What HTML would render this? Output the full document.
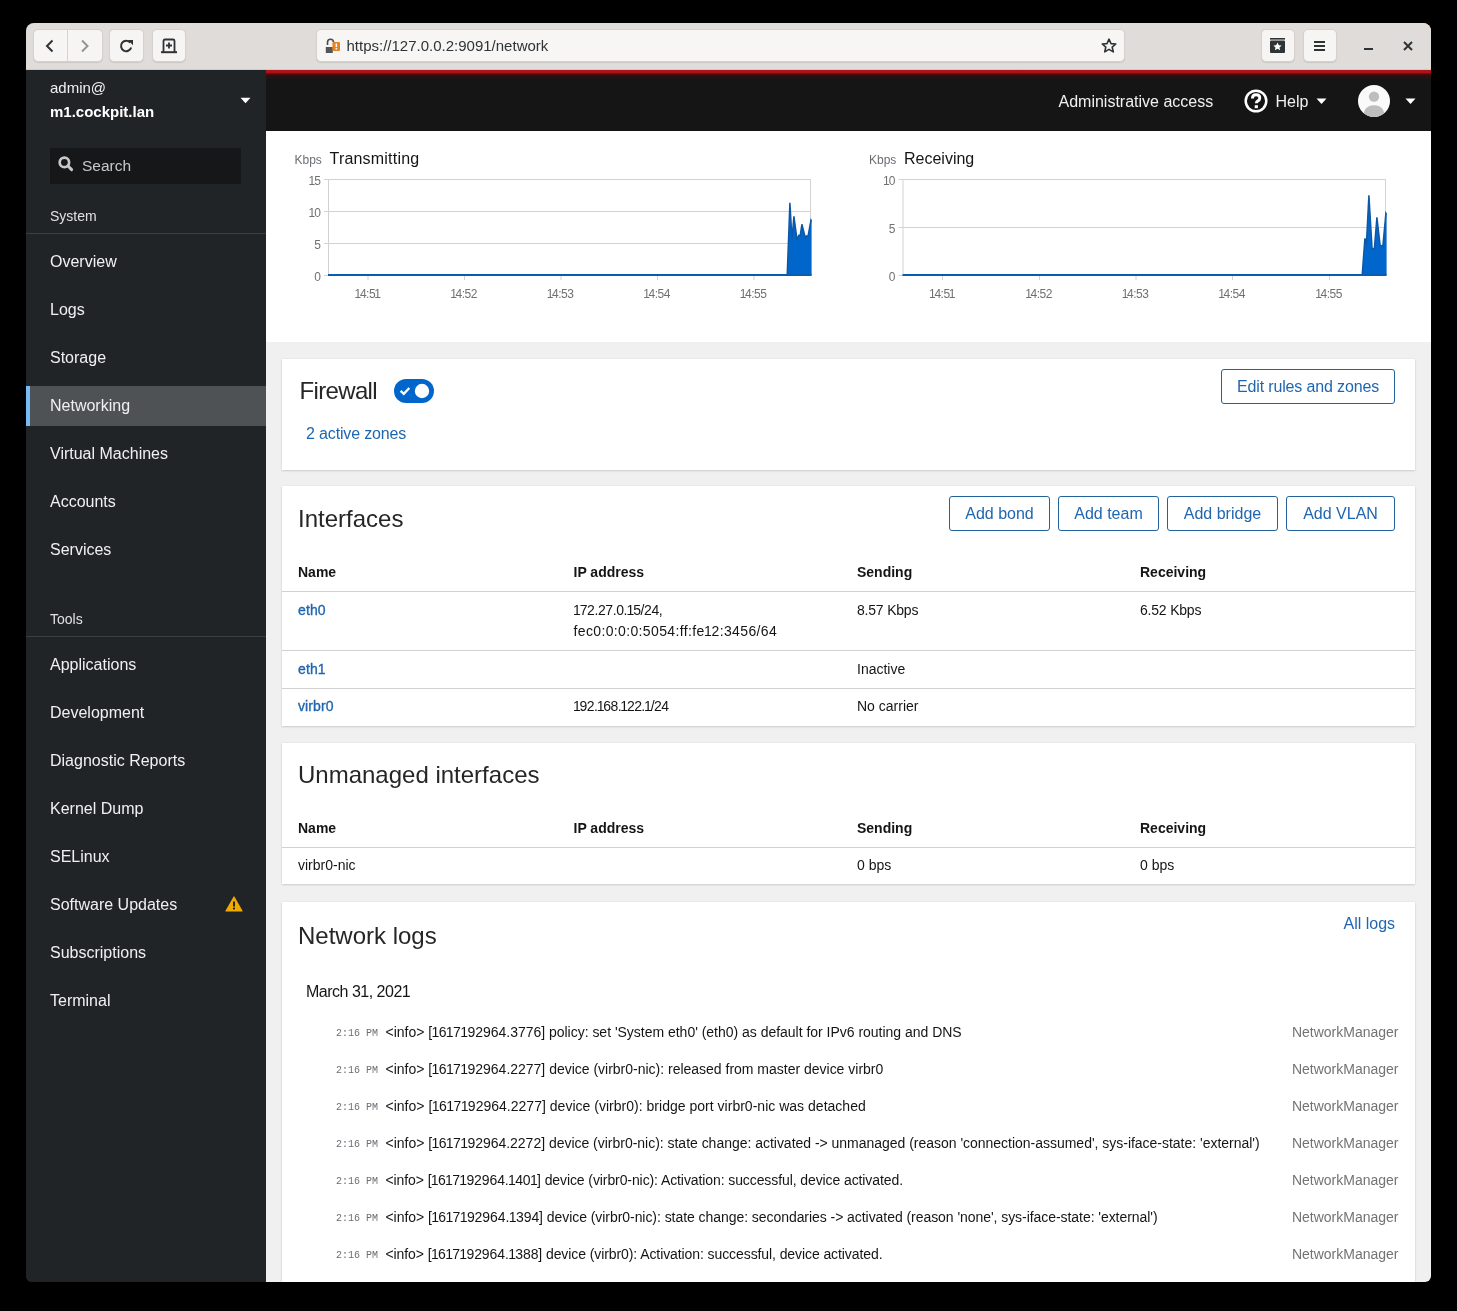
<!DOCTYPE html>
<html><head><meta charset="utf-8">
<style>
*{box-sizing:border-box}
html,body{margin:0;padding:0}
body{width:1457px;height:1311px;background:#000;position:relative;overflow:hidden;font-family:"Liberation Sans",sans-serif;color:#151515}
.a{position:absolute}
.btn{background:#f6f5f4;border:1px solid #d6d1cd;border-radius:5px;box-shadow:0 1px 1px rgba(0,0,0,.09)}
.card{background:#fff;box-shadow:0 1px 2px 0 rgba(3,3,3,.14),0 0 2px 0 rgba(3,3,3,.07)}
.obtn{position:absolute;border:1px solid #22639c;border-radius:3px;background:#fff}
svg{position:absolute;overflow:visible}
</style></head>
<body><div style="position:absolute;left:0;top:0;width:1457px;height:1311px;will-change:transform">
<div class="a" style="left:26px;top:23px;width:1405px;height:1259px;background:linear-gradient(to right,#212427 240px,#f0f0f0 240px);border-radius:8px 8px 6px 6px"></div>
<div class="a" style="left:26px;top:23px;width:1405px;height:47px;background:#dfdcd9;border-radius:8px 8px 0 0;border-bottom:1px solid #cfcac6"></div>
<div class="a btn" style="left:33px;top:29px;width:70px;height:33px"></div>
<div class="a" style="left:67px;top:30px;width:1px;height:31px;background:#d8d3cf"></div>
<div class="a btn" style="left:109px;top:29px;width:35px;height:33px"></div>
<div class="a btn" style="left:152px;top:29px;width:34px;height:33px"></div>
<svg style="left:44px;top:39px" width="12" height="14" viewBox="0 0 12 14"><path d="M8.5 1.5 L3 7 L8.5 12.5" fill="none" stroke="#2e3436" stroke-width="2"/></svg>
<svg style="left:79px;top:39px" width="12" height="14" viewBox="0 0 12 14"><path d="M3 1.5 L8.5 7 L3 12.5" fill="none" stroke="#929595" stroke-width="2"/></svg>
<svg style="left:119px;top:39px" width="16" height="14" viewBox="0 0 16 14"><path d="M11.2 3.6 A5.2 5.2 0 1 0 12.2 8.5" fill="none" stroke="#2e3436" stroke-width="2"/><path d="M8.8 1 L14 1 L14 6.2 Z" fill="#2e3436"/></svg>
<svg style="left:160px;top:38px" width="18" height="16" viewBox="0 0 18 16"><path d="M3.5 14 V3 Q3.5 1.5 5 1.5 H13 Q14.5 1.5 14.5 3 V14" fill="none" stroke="#2e3436" stroke-width="1.8"/><rect x="1" y="13.2" width="16" height="2" fill="#2e3436"/><path d="M9 4.5 V10.5 M6 7.5 H12" stroke="#2e3436" stroke-width="1.8"/></svg>
<div class="a btn" style="left:316px;top:29px;width:809px;height:33px;background:#f7f6f5"></div>
<svg style="left:325px;top:38px" width="16" height="16" viewBox="0 0 16 16"><path d="M2.5 7 V4.2 A3 3 0 0 1 8.5 4.2" fill="none" stroke="#4d4d4d" stroke-width="1.6"/><rect x="0.8" y="9" width="7" height="6" fill="#555"/><rect x="7.5" y="4" width="7.5" height="9" rx="1.2" fill="#e5841e"/><rect x="10.6" y="5.5" width="1.5" height="3.6" fill="#fff"/><rect x="10.6" y="10" width="1.5" height="1.5" fill="#fff"/></svg>
<div class="a " style="left:346.5px;top:37.80px;font-size:15px;line-height:15px;font-family:'Liberation Sans',sans-serif;white-space:nowrap;color:#2e3436">https://127.0.0.2:9091/network</div>
<svg style="left:1101px;top:38px" width="16" height="15" viewBox="0 0 16 15"><path d="M8 1.2 L10 5.6 L14.8 6 L11.2 9.2 L12.3 13.9 L8 11.4 L3.7 13.9 L4.8 9.2 L1.2 6 L6 5.6 Z" fill="none" stroke="#2e3436" stroke-width="1.6" stroke-linejoin="round"/></svg>
<div class="a btn" style="left:1261px;top:29px;width:34px;height:33px"></div>
<div class="a btn" style="left:1303px;top:29px;width:34px;height:33px"></div>
<svg style="left:1269px;top:37px" width="17" height="17" viewBox="0 0 17 17"><rect x="1" y="1" width="15" height="1.6" fill="#2e3436"/><rect x="1" y="3.5" width="15" height="12.5" rx="1" fill="#2e3436"/><path d="M8.5 5.6 L9.8 8.3 L12.6 8.6 L10.5 10.5 L11.1 13.3 L8.5 11.8 L5.9 13.3 L6.5 10.5 L4.4 8.6 L7.2 8.3 Z" fill="#fff"/></svg>
<svg style="left:1313px;top:40px" width="13" height="12" viewBox="0 0 13 12"><rect x="1" y="1" width="11" height="2" fill="#2e3436"/><rect x="1" y="5" width="11" height="2" fill="#2e3436"/><rect x="1" y="9" width="11" height="2" fill="#2e3436"/></svg>
<div class="a" style="left:1364px;top:48px;width:9px;height:2px;background:#2e3436"></div>
<svg style="left:1403px;top:41px" width="10" height="10" viewBox="0 0 10 10"><path d="M1 1 L9 9 M9 1 L1 9" stroke="#2e3436" stroke-width="2"/></svg>
<div class="a" style="left:26px;top:70px;width:240px;height:1212px;background:#212427;border-bottom-left-radius:6px"></div>
<div class="a " style="left:50px;top:80.30px;font-size:15px;line-height:15px;font-family:'Liberation Sans',sans-serif;white-space:nowrap;color:#f0f0f0">admin@</div>
<div class="a " style="left:50px;top:104.30px;font-size:15px;line-height:15px;font-family:'Liberation Sans',sans-serif;white-space:nowrap;color:#fff;font-weight:700">m1.cockpit.lan</div>
<svg style="left:240px;top:97px" width="11" height="7" viewBox="0 0 11 7"><path d="M0.5 0.8 L10.5 0.8 L5.5 6.2 Z" fill="#fff"/></svg>
<div class="a" style="left:50px;top:148px;width:191px;height:36px;background:#161718"></div>
<svg style="left:58px;top:156px" width="16" height="16" viewBox="0 0 16 16"><circle cx="6.4" cy="6.4" r="4.7" fill="none" stroke="#c8c8c8" stroke-width="2.7"/><path d="M9.8 9.8 L13.6 13.6" stroke="#c8c8c8" stroke-width="3" stroke-linecap="round"/></svg>
<div class="a " style="left:82px;top:157.58px;font-size:15.5px;line-height:15.5px;font-family:'Liberation Sans',sans-serif;white-space:nowrap;color:#c8c8c8">Search</div>
<div class="a " style="left:50px;top:209.15px;font-size:14px;line-height:14px;font-family:'Liberation Sans',sans-serif;white-space:nowrap;color:#e0e0e0">System</div>
<div class="a" style="left:26px;top:233px;width:240px;height:1px;background:#3c3f42"></div>
<div class="a" style="left:26px;top:386px;width:240px;height:40px;background:#4f5255"></div>
<div class="a" style="left:26px;top:386px;width:4px;height:40px;background:#73bcf7"></div>
<div class="a " style="left:50px;top:254.46px;font-size:16px;line-height:16px;font-family:'Liberation Sans',sans-serif;white-space:nowrap;color:#f0f0f0">Overview</div>
<div class="a " style="left:50px;top:302.46px;font-size:16px;line-height:16px;font-family:'Liberation Sans',sans-serif;white-space:nowrap;color:#f0f0f0">Logs</div>
<div class="a " style="left:50px;top:350.46px;font-size:16px;line-height:16px;font-family:'Liberation Sans',sans-serif;white-space:nowrap;color:#f0f0f0">Storage</div>
<div class="a " style="left:50px;top:398.46px;font-size:16px;line-height:16px;font-family:'Liberation Sans',sans-serif;white-space:nowrap;color:#f0f0f0">Networking</div>
<div class="a " style="left:50px;top:446.46px;font-size:16px;line-height:16px;font-family:'Liberation Sans',sans-serif;white-space:nowrap;color:#f0f0f0">Virtual Machines</div>
<div class="a " style="left:50px;top:494.46px;font-size:16px;line-height:16px;font-family:'Liberation Sans',sans-serif;white-space:nowrap;color:#f0f0f0">Accounts</div>
<div class="a " style="left:50px;top:542.46px;font-size:16px;line-height:16px;font-family:'Liberation Sans',sans-serif;white-space:nowrap;color:#f0f0f0">Services</div>
<div class="a " style="left:50px;top:612.15px;font-size:14px;line-height:14px;font-family:'Liberation Sans',sans-serif;white-space:nowrap;color:#e0e0e0">Tools</div>
<div class="a" style="left:26px;top:636px;width:240px;height:1px;background:#3c3f42"></div>
<div class="a " style="left:50px;top:657.46px;font-size:16px;line-height:16px;font-family:'Liberation Sans',sans-serif;white-space:nowrap;color:#f0f0f0">Applications</div>
<div class="a " style="left:50px;top:705.46px;font-size:16px;line-height:16px;font-family:'Liberation Sans',sans-serif;white-space:nowrap;color:#f0f0f0">Development</div>
<div class="a " style="left:50px;top:753.46px;font-size:16px;line-height:16px;font-family:'Liberation Sans',sans-serif;white-space:nowrap;color:#f0f0f0">Diagnostic Reports</div>
<div class="a " style="left:50px;top:801.46px;font-size:16px;line-height:16px;font-family:'Liberation Sans',sans-serif;white-space:nowrap;color:#f0f0f0">Kernel Dump</div>
<div class="a " style="left:50px;top:849.46px;font-size:16px;line-height:16px;font-family:'Liberation Sans',sans-serif;white-space:nowrap;color:#f0f0f0">SELinux</div>
<div class="a " style="left:50px;top:897.46px;font-size:16px;line-height:16px;font-family:'Liberation Sans',sans-serif;white-space:nowrap;color:#f0f0f0">Software Updates</div>
<div class="a " style="left:50px;top:945.46px;font-size:16px;line-height:16px;font-family:'Liberation Sans',sans-serif;white-space:nowrap;color:#f0f0f0">Subscriptions</div>
<div class="a " style="left:50px;top:993.46px;font-size:16px;line-height:16px;font-family:'Liberation Sans',sans-serif;white-space:nowrap;color:#f0f0f0">Terminal</div>
<svg style="left:225px;top:896px" width="18" height="16" viewBox="0 0 18 16"><path d="M9 1 L17 15 L1 15 Z" fill="#f0ab00" stroke="#f0ab00" stroke-width="1.2" stroke-linejoin="round"/><rect x="8.1" y="5.5" width="1.8" height="5" fill="#151515"/><rect x="8.1" y="11.6" width="1.8" height="1.8" fill="#151515"/></svg>
<div class="a" style="left:266px;top:70px;width:1165px;height:61px;background:#151515"></div>
<div class="a" style="left:266px;top:70px;width:1165px;height:10px;background:linear-gradient(#b3141a 0,#a81218 2.5px,#5e0a0c 4px,#2e1011 5.5px,#1d1515 8px,#151515 10px)"></div>
<div class="a " style="left:1058.5px;top:93.96px;font-size:16px;line-height:16px;font-family:'Liberation Sans',sans-serif;white-space:nowrap;color:#f0f0f0">Administrative access</div>
<svg style="left:1244px;top:89px" width="24" height="24" viewBox="0 0 24 24"><circle cx="12" cy="12" r="10.3" fill="none" stroke="#fff" stroke-width="2.5"/><path d="M8.4 9.6 Q8.4 5.8 12.1 5.8 Q15.8 5.8 15.8 9 Q15.8 11 13.6 12.1 Q12.3 12.8 12.3 14.3" fill="none" stroke="#fff" stroke-width="2.9"/><rect x="10.7" y="16.2" width="3.2" height="3" fill="#fff"/></svg>
<div class="a " style="left:1275.5px;top:93.96px;font-size:16px;line-height:16px;font-family:'Liberation Sans',sans-serif;white-space:nowrap;color:#f0f0f0">Help</div>
<svg style="left:1316px;top:98px" width="11" height="7" viewBox="0 0 11 7"><path d="M0.5 0.5 L10.5 0.5 L5.5 6 Z" fill="#fff"/></svg>
<svg style="left:1358px;top:85px" width="32" height="32" viewBox="0 0 32 32"><clipPath id="av"><circle cx="16" cy="16" r="16"/></clipPath><circle cx="16" cy="16" r="16" fill="#fafafa"/><g clip-path="url(#av)"><circle cx="16" cy="11.6" r="5.2" fill="#bebebe"/><path d="M5.5 32 Q5.5 20.3 16 20.3 Q26.5 20.3 26.5 32 Z" fill="#bebebe"/></g></svg>
<svg style="left:1405px;top:98px" width="11" height="7" viewBox="0 0 11 7"><path d="M0.5 0.5 L10.5 0.5 L5.5 6 Z" fill="#fff"/></svg>
<div class="a" style="left:266px;top:131px;width:1165px;height:211px;background:#fff"></div>
<div class="a " style="left:294.5px;top:153.84px;font-size:12px;line-height:12px;font-family:'Liberation Sans',sans-serif;white-space:nowrap;color:#6a6e73">Kbps</div>
<div class="a " style="left:329.5px;top:151.46px;font-size:16px;line-height:16px;font-family:'Liberation Sans',sans-serif;white-space:nowrap;color:#151515;letter-spacing:0.2px">Transmitting</div>
<svg style="left:0;top:0" width="1457" height="1311">
<line x1="324" y1="275.5" x2="810" y2="275.5" stroke="#d2d2d2" stroke-width="1"/>
<line x1="324" y1="243.5" x2="810" y2="243.5" stroke="#d2d2d2" stroke-width="1"/>
<line x1="324" y1="211.5" x2="810" y2="211.5" stroke="#d2d2d2" stroke-width="1"/>
<line x1="324" y1="179.5" x2="810" y2="179.5" stroke="#d2d2d2" stroke-width="1"/>
<line x1="328.5" y1="179" x2="328.5" y2="275" stroke="#d2d2d2" stroke-width="1"/>
<line x1="810.5" y1="179" x2="810.5" y2="275" stroke="#d2d2d2" stroke-width="1"/>
<line x1="368.0" y1="275" x2="368.0" y2="280" stroke="#d2d2d2" stroke-width="1"/>
<line x1="464.5" y1="275" x2="464.5" y2="280" stroke="#d2d2d2" stroke-width="1"/>
<line x1="561.0" y1="275" x2="561.0" y2="280" stroke="#d2d2d2" stroke-width="1"/>
<line x1="657.5" y1="275" x2="657.5" y2="280" stroke="#d2d2d2" stroke-width="1"/>
<line x1="754.0" y1="275" x2="754.0" y2="280" stroke="#d2d2d2" stroke-width="1"/>
<path d="M328.0 275.0 L787.2 275.0 L789.9 202.7 L792.0 239.5 L793.9 216.4 L797.1 240.1 L798.8 235.3 L800.2 235.7 L801.9 224.3 L805.4 238.1 L806.4 236.0 L808.1 236.0 L811.0 220.2 L811.6 221.2 L811.6 275.0 Z" fill="#0066cc"/>
<path d="M787.2 275.0 L789.9 202.7 L792.0 239.5 L793.9 216.4 L797.1 240.1 L798.8 235.3 L800.2 235.7 L801.9 224.3 L805.4 238.1 L806.4 236.0 L808.1 236.0 L811.0 220.2 L811.6 221.2" fill="none" stroke="#0d58a6" stroke-width="1.5" stroke-linejoin="miter"/>
<line x1="328" y1="275" x2="811.6" y2="275" stroke="#0b5cad" stroke-width="2"/>
</svg>
<div class="a" style="left:268px;top:271.0px;width:53px;text-align:right;font-size:12px;line-height:12px;color:#707070">0</div>
<div class="a" style="left:268px;top:239.0px;width:53px;text-align:right;font-size:12px;line-height:12px;color:#707070">5</div>
<div class="a" style="left:268px;top:207.0px;width:53px;text-align:right;font-size:12px;line-height:12px;color:#707070"><span style="margin:0 -0.8px">1</span>0</div>
<div class="a" style="left:268px;top:175.0px;width:53px;text-align:right;font-size:12px;line-height:12px;color:#707070"><span style="margin:0 -0.8px">1</span>5</div>
<div class="a" style="left:337.5px;top:288px;width:60px;text-align:center;font-size:12px;line-height:12px;letter-spacing:-0.5px;color:#707070"><span style="margin:0 -0.9px">1</span>4:5<span style="margin:0 -0.9px">1</span></div>
<div class="a" style="left:434px;top:288px;width:60px;text-align:center;font-size:12px;line-height:12px;letter-spacing:-0.5px;color:#707070"><span style="margin:0 -0.9px">1</span>4:52</div>
<div class="a" style="left:530.5px;top:288px;width:60px;text-align:center;font-size:12px;line-height:12px;letter-spacing:-0.5px;color:#707070"><span style="margin:0 -0.9px">1</span>4:53</div>
<div class="a" style="left:627px;top:288px;width:60px;text-align:center;font-size:12px;line-height:12px;letter-spacing:-0.5px;color:#707070"><span style="margin:0 -0.9px">1</span>4:54</div>
<div class="a" style="left:723.5px;top:288px;width:60px;text-align:center;font-size:12px;line-height:12px;letter-spacing:-0.5px;color:#707070"><span style="margin:0 -0.9px">1</span>4:55</div>
<div class="a " style="left:869.0px;top:153.84px;font-size:12px;line-height:12px;font-family:'Liberation Sans',sans-serif;white-space:nowrap;color:#6a6e73">Kbps</div>
<div class="a " style="left:904.0px;top:151.46px;font-size:16px;line-height:16px;font-family:'Liberation Sans',sans-serif;white-space:nowrap;color:#151515;letter-spacing:0">Receiving</div>
<svg style="left:0;top:0" width="1457" height="1311">
<line x1="898.5" y1="275.5" x2="1385" y2="275.5" stroke="#d2d2d2" stroke-width="1"/>
<line x1="898.5" y1="227.5" x2="1385" y2="227.5" stroke="#d2d2d2" stroke-width="1"/>
<line x1="898.5" y1="179.5" x2="1385" y2="179.5" stroke="#d2d2d2" stroke-width="1"/>
<line x1="903.0" y1="179" x2="903.0" y2="275" stroke="#d2d2d2" stroke-width="1"/>
<line x1="1385.5" y1="179" x2="1385.5" y2="275" stroke="#d2d2d2" stroke-width="1"/>
<line x1="942.5" y1="275" x2="942.5" y2="280" stroke="#d2d2d2" stroke-width="1"/>
<line x1="1039.5" y1="275" x2="1039.5" y2="280" stroke="#d2d2d2" stroke-width="1"/>
<line x1="1136.0" y1="275" x2="1136.0" y2="280" stroke="#d2d2d2" stroke-width="1"/>
<line x1="1232.5" y1="275" x2="1232.5" y2="280" stroke="#d2d2d2" stroke-width="1"/>
<line x1="1329.5" y1="275" x2="1329.5" y2="280" stroke="#d2d2d2" stroke-width="1"/>
<path d="M902.5 275.0 L1362.2 275.0 L1364.9 238.4 L1366.4 244.1 L1368.9 195.3 L1372.1 249.0 L1374.4 248.3 L1376.9 217.4 L1380.1 245.2 L1381.3 245.6 L1382.8 246.7 L1385.9 213.2 L1386.6 214.5 L1386.6 275.0 Z" fill="#0066cc"/>
<path d="M1362.2 275.0 L1364.9 238.4 L1366.4 244.1 L1368.9 195.3 L1372.1 249.0 L1374.4 248.3 L1376.9 217.4 L1380.1 245.2 L1381.3 245.6 L1382.8 246.7 L1385.9 213.2 L1386.6 214.5" fill="none" stroke="#0d58a6" stroke-width="1.5" stroke-linejoin="miter"/>
<line x1="902.5" y1="275" x2="1386.6" y2="275" stroke="#0b5cad" stroke-width="2"/>
</svg>
<div class="a" style="left:842.5px;top:271.0px;width:53px;text-align:right;font-size:12px;line-height:12px;color:#707070">0</div>
<div class="a" style="left:842.5px;top:223.0px;width:53px;text-align:right;font-size:12px;line-height:12px;color:#707070">5</div>
<div class="a" style="left:842.5px;top:175.0px;width:53px;text-align:right;font-size:12px;line-height:12px;color:#707070"><span style="margin:0 -0.8px">1</span>0</div>
<div class="a" style="left:912px;top:288px;width:60px;text-align:center;font-size:12px;line-height:12px;letter-spacing:-0.5px;color:#707070"><span style="margin:0 -0.9px">1</span>4:5<span style="margin:0 -0.9px">1</span></div>
<div class="a" style="left:1009px;top:288px;width:60px;text-align:center;font-size:12px;line-height:12px;letter-spacing:-0.5px;color:#707070"><span style="margin:0 -0.9px">1</span>4:52</div>
<div class="a" style="left:1105.5px;top:288px;width:60px;text-align:center;font-size:12px;line-height:12px;letter-spacing:-0.5px;color:#707070"><span style="margin:0 -0.9px">1</span>4:53</div>
<div class="a" style="left:1202px;top:288px;width:60px;text-align:center;font-size:12px;line-height:12px;letter-spacing:-0.5px;color:#707070"><span style="margin:0 -0.9px">1</span>4:54</div>
<div class="a" style="left:1299px;top:288px;width:60px;text-align:center;font-size:12px;line-height:12px;letter-spacing:-0.5px;color:#707070"><span style="margin:0 -0.9px">1</span>4:55</div>
<div class="a card" style="left:282px;top:359px;width:1133px;height:111px"></div>
<div class="a card" style="left:282px;top:486px;width:1133px;height:240px"></div>
<div class="a card" style="left:282px;top:743px;width:1133px;height:141px"></div>
<div class="a card" style="left:282px;top:902px;width:1133px;height:380px"></div>
<div class="a " style="left:299.5px;top:379.18px;font-size:24px;line-height:24px;font-family:'Liberation Sans',sans-serif;white-space:nowrap;color:#262626;letter-spacing:-0.65px">Firewall</div>
<svg style="left:394px;top:379px" width="40" height="24" viewBox="0 0 40 24"><rect x="0" y="0" width="40" height="24" rx="12" fill="#0066cc"/><circle cx="28" cy="12" r="7.2" fill="#fff"/><path d="M6.6 11.8 L9.8 14.9 L15.3 9" fill="none" stroke="#fff" stroke-width="2.3"/></svg>
<div class="a " style="left:306px;top:425.96px;font-size:16px;line-height:16px;font-family:'Liberation Sans',sans-serif;white-space:nowrap;color:#1f66b0;letter-spacing:-0.15px">2 active zones</div>
<div class="obtn" style="left:1221px;top:369px;width:174px;height:35px"></div>
<div class="a" style="left:1221px;top:379.46px;width:174px;text-align:center;font-size:16px;line-height:16px;color:#1f66b0;white-space:nowrap;letter-spacing:-0.15px">Edit rules and zones</div>
<div class="a " style="left:298px;top:507.18px;font-size:24px;line-height:24px;font-family:'Liberation Sans',sans-serif;white-space:nowrap;color:#262626">Interfaces</div>
<div class="obtn" style="left:949px;top:496px;width:101px;height:35px"></div>
<div class="a" style="left:949px;top:506.46px;width:101px;text-align:center;font-size:16px;line-height:16px;color:#1f66b0;white-space:nowrap;">Add bond</div>
<div class="obtn" style="left:1058px;top:496px;width:101px;height:35px"></div>
<div class="a" style="left:1058px;top:506.46px;width:101px;text-align:center;font-size:16px;line-height:16px;color:#1f66b0;white-space:nowrap;">Add team</div>
<div class="obtn" style="left:1167px;top:496px;width:111px;height:35px"></div>
<div class="a" style="left:1167px;top:506.46px;width:111px;text-align:center;font-size:16px;line-height:16px;color:#1f66b0;white-space:nowrap;">Add bridge</div>
<div class="obtn" style="left:1286px;top:496px;width:109px;height:35px"></div>
<div class="a" style="left:1286px;top:506.46px;width:109px;text-align:center;font-size:16px;line-height:16px;color:#1f66b0;white-space:nowrap;">Add VLAN</div>
<div class="a " style="left:298px;top:564.85px;font-size:14px;line-height:14px;font-family:'Liberation Sans',sans-serif;white-space:nowrap;color:#151515;font-weight:700">Name</div>
<div class="a " style="left:573.5px;top:564.85px;font-size:14px;line-height:14px;font-family:'Liberation Sans',sans-serif;white-space:nowrap;color:#151515;font-weight:700">IP address</div>
<div class="a " style="left:857px;top:564.85px;font-size:14px;line-height:14px;font-family:'Liberation Sans',sans-serif;white-space:nowrap;color:#151515;font-weight:700">Sending</div>
<div class="a " style="left:1140px;top:564.85px;font-size:14px;line-height:14px;font-family:'Liberation Sans',sans-serif;white-space:nowrap;color:#151515;font-weight:700">Receiving</div>
<div class="a" style="left:282px;top:591px;width:1133px;height:1px;background:#d2d2d2"></div>
<div class="a " style="left:298px;top:602.65px;font-size:14px;line-height:14px;font-family:'Liberation Sans',sans-serif;white-space:nowrap;color:#1f66b0;-webkit-text-stroke:0.35px #1f66b0;letter-spacing:0.1px">eth0</div>
<div class="a " style="left:573.5px;top:602.65px;font-size:14px;line-height:14px;font-family:'Liberation Sans',sans-serif;white-space:nowrap;color:#151515;letter-spacing:-0.41px"><span style="margin:0 -0.6px">1</span>72.27.0.<span style="margin:0 -0.6px">1</span>5/24,</div>
<div class="a " style="left:573.5px;top:623.65px;font-size:14px;line-height:14px;font-family:'Liberation Sans',sans-serif;white-space:nowrap;color:#151515;letter-spacing:0.36px">fec0:0:0:0:5054:ff:fe<span style="margin:0 -0.6px">1</span>2:3456/64</div>
<div class="a " style="left:857px;top:602.65px;font-size:14px;line-height:14px;font-family:'Liberation Sans',sans-serif;white-space:nowrap;color:#151515;letter-spacing:-0.2px">8.57 Kbps</div>
<div class="a " style="left:1140px;top:602.65px;font-size:14px;line-height:14px;font-family:'Liberation Sans',sans-serif;white-space:nowrap;color:#151515;letter-spacing:-0.2px">6.52 Kbps</div>
<div class="a" style="left:282px;top:650px;width:1133px;height:1px;background:#d2d2d2"></div>
<div class="a " style="left:298px;top:661.65px;font-size:14px;line-height:14px;font-family:'Liberation Sans',sans-serif;white-space:nowrap;color:#1f66b0;-webkit-text-stroke:0.35px #1f66b0;letter-spacing:0.1px">eth1</div>
<div class="a " style="left:857px;top:661.65px;font-size:14px;line-height:14px;font-family:'Liberation Sans',sans-serif;white-space:nowrap;color:#151515">Inactive</div>
<div class="a" style="left:282px;top:688px;width:1133px;height:1px;background:#d2d2d2"></div>
<div class="a " style="left:298px;top:699.15px;font-size:14px;line-height:14px;font-family:'Liberation Sans',sans-serif;white-space:nowrap;color:#1f66b0;-webkit-text-stroke:0.35px #1f66b0;letter-spacing:0.1px">virbr0</div>
<div class="a " style="left:573.5px;top:699.15px;font-size:14px;line-height:14px;font-family:'Liberation Sans',sans-serif;white-space:nowrap;color:#151515;letter-spacing:-0.59px"><span style="margin:0 -0.6px">1</span>92.<span style="margin:0 -0.6px">1</span>68.<span style="margin:0 -0.6px">1</span>22.<span style="margin:0 -0.6px">1</span>/24</div>
<div class="a " style="left:857px;top:699.15px;font-size:14px;line-height:14px;font-family:'Liberation Sans',sans-serif;white-space:nowrap;color:#151515">No carrier</div>
<div class="a " style="left:298px;top:763.18px;font-size:24px;line-height:24px;font-family:'Liberation Sans',sans-serif;white-space:nowrap;color:#262626">Unmanaged interfaces</div>
<div class="a " style="left:298px;top:820.85px;font-size:14px;line-height:14px;font-family:'Liberation Sans',sans-serif;white-space:nowrap;color:#151515;font-weight:700">Name</div>
<div class="a " style="left:573.5px;top:820.85px;font-size:14px;line-height:14px;font-family:'Liberation Sans',sans-serif;white-space:nowrap;color:#151515;font-weight:700">IP address</div>
<div class="a " style="left:857px;top:820.85px;font-size:14px;line-height:14px;font-family:'Liberation Sans',sans-serif;white-space:nowrap;color:#151515;font-weight:700">Sending</div>
<div class="a " style="left:1140px;top:820.85px;font-size:14px;line-height:14px;font-family:'Liberation Sans',sans-serif;white-space:nowrap;color:#151515;font-weight:700">Receiving</div>
<div class="a" style="left:282px;top:847px;width:1133px;height:1px;background:#d2d2d2"></div>
<div class="a " style="left:298px;top:858.35px;font-size:14px;line-height:14px;font-family:'Liberation Sans',sans-serif;white-space:nowrap;color:#151515">virbr0-nic</div>
<div class="a " style="left:857px;top:858.35px;font-size:14px;line-height:14px;font-family:'Liberation Sans',sans-serif;white-space:nowrap;color:#151515">0 bps</div>
<div class="a " style="left:1140px;top:858.35px;font-size:14px;line-height:14px;font-family:'Liberation Sans',sans-serif;white-space:nowrap;color:#151515">0 bps</div>
<div class="a " style="left:298px;top:924.18px;font-size:24px;line-height:24px;font-family:'Liberation Sans',sans-serif;white-space:nowrap;color:#262626">Network logs</div>
<div class="a " style="left:1343.5px;top:915.96px;font-size:16px;line-height:16px;font-family:'Liberation Sans',sans-serif;white-space:nowrap;color:#1f66b0">All logs</div>
<div class="a " style="left:306px;top:983.96px;font-size:16px;line-height:16px;font-family:'Liberation Sans',sans-serif;white-space:nowrap;color:#151515;letter-spacing:-0.5px">March 31, 2021</div>
<div class="a " style="left:336px;top:1029.14px;font-size:10px;line-height:10px;font-family:'Liberation Mono',monospace;white-space:nowrap;color:#6a6e73">2:16 PM</div>
<div class="a " style="left:385.5px;top:1024.95px;font-size:14px;line-height:14px;font-family:'Liberation Sans',sans-serif;white-space:nowrap;color:#151515;letter-spacing:-0.0175px">&lt;info&gt; [<span style="margin:0 -0.6px">1</span>6<span style="margin:0 -0.6px">1</span>7<span style="margin:0 -0.6px">1</span>92964.3776] policy: set &#x27;System eth0&#x27; (eth0) as default for IPv6 routing and DNS</div>
<div class="a" style="left:1200px;top:1024.95px;width:1198.5px;font-size:14px;line-height:14px;color:#737373;white-space:nowrap;text-align:right;width:198.5px">NetworkManager</div>
<div class="a " style="left:336px;top:1066.14px;font-size:10px;line-height:10px;font-family:'Liberation Mono',monospace;white-space:nowrap;color:#6a6e73">2:16 PM</div>
<div class="a " style="left:385.5px;top:1061.95px;font-size:14px;line-height:14px;font-family:'Liberation Sans',sans-serif;white-space:nowrap;color:#151515;letter-spacing:-0.008px">&lt;info&gt; [<span style="margin:0 -0.6px">1</span>6<span style="margin:0 -0.6px">1</span>7<span style="margin:0 -0.6px">1</span>92964.2277] device (virbr0-nic): released from master device virbr0</div>
<div class="a" style="left:1200px;top:1061.95px;width:1198.5px;font-size:14px;line-height:14px;color:#737373;white-space:nowrap;text-align:right;width:198.5px">NetworkManager</div>
<div class="a " style="left:336px;top:1103.14px;font-size:10px;line-height:10px;font-family:'Liberation Mono',monospace;white-space:nowrap;color:#6a6e73">2:16 PM</div>
<div class="a " style="left:385.5px;top:1098.95px;font-size:14px;line-height:14px;font-family:'Liberation Sans',sans-serif;white-space:nowrap;color:#151515;letter-spacing:0.0165px">&lt;info&gt; [<span style="margin:0 -0.6px">1</span>6<span style="margin:0 -0.6px">1</span>7<span style="margin:0 -0.6px">1</span>92964.2277] device (virbr0): bridge port virbr0-nic was detached</div>
<div class="a" style="left:1200px;top:1098.95px;width:1198.5px;font-size:14px;line-height:14px;color:#737373;white-space:nowrap;text-align:right;width:198.5px">NetworkManager</div>
<div class="a " style="left:336px;top:1140.14px;font-size:10px;line-height:10px;font-family:'Liberation Mono',monospace;white-space:nowrap;color:#6a6e73">2:16 PM</div>
<div class="a " style="left:385.5px;top:1135.95px;font-size:14px;line-height:14px;font-family:'Liberation Sans',sans-serif;white-space:nowrap;color:#151515;letter-spacing:-0.0198px">&lt;info&gt; [<span style="margin:0 -0.6px">1</span>6<span style="margin:0 -0.6px">1</span>7<span style="margin:0 -0.6px">1</span>92964.2272] device (virbr0-nic): state change: activated -&gt; unmanaged (reason &#x27;connection-assumed&#x27;, sys-iface-state: &#x27;external&#x27;)</div>
<div class="a" style="left:1200px;top:1135.95px;width:1198.5px;font-size:14px;line-height:14px;color:#737373;white-space:nowrap;text-align:right;width:198.5px">NetworkManager</div>
<div class="a " style="left:336px;top:1177.14px;font-size:10px;line-height:10px;font-family:'Liberation Mono',monospace;white-space:nowrap;color:#6a6e73">2:16 PM</div>
<div class="a " style="left:385.5px;top:1172.95px;font-size:14px;line-height:14px;font-family:'Liberation Sans',sans-serif;white-space:nowrap;color:#151515;letter-spacing:-0.0951px">&lt;info&gt; [<span style="margin:0 -0.6px">1</span>6<span style="margin:0 -0.6px">1</span>7<span style="margin:0 -0.6px">1</span>92964.<span style="margin:0 -0.6px">1</span>40<span style="margin:0 -0.6px">1</span>] device (virbr0-nic): Activation: successful, device activated.</div>
<div class="a" style="left:1200px;top:1172.95px;width:1198.5px;font-size:14px;line-height:14px;color:#737373;white-space:nowrap;text-align:right;width:198.5px">NetworkManager</div>
<div class="a " style="left:336px;top:1214.14px;font-size:10px;line-height:10px;font-family:'Liberation Mono',monospace;white-space:nowrap;color:#6a6e73">2:16 PM</div>
<div class="a " style="left:385.5px;top:1209.95px;font-size:14px;line-height:14px;font-family:'Liberation Sans',sans-serif;white-space:nowrap;color:#151515;letter-spacing:-0.0554px">&lt;info&gt; [<span style="margin:0 -0.6px">1</span>6<span style="margin:0 -0.6px">1</span>7<span style="margin:0 -0.6px">1</span>92964.<span style="margin:0 -0.6px">1</span>394] device (virbr0-nic): state change: secondaries -&gt; activated (reason &#x27;none&#x27;, sys-iface-state: &#x27;external&#x27;)</div>
<div class="a" style="left:1200px;top:1209.95px;width:1198.5px;font-size:14px;line-height:14px;color:#737373;white-space:nowrap;text-align:right;width:198.5px">NetworkManager</div>
<div class="a " style="left:336px;top:1251.14px;font-size:10px;line-height:10px;font-family:'Liberation Mono',monospace;white-space:nowrap;color:#6a6e73">2:16 PM</div>
<div class="a " style="left:385.5px;top:1246.95px;font-size:14px;line-height:14px;font-family:'Liberation Sans',sans-serif;white-space:nowrap;color:#151515;letter-spacing:-0.0879px">&lt;info&gt; [<span style="margin:0 -0.6px">1</span>6<span style="margin:0 -0.6px">1</span>7<span style="margin:0 -0.6px">1</span>92964.<span style="margin:0 -0.6px">1</span>388] device (virbr0): Activation: successful, device activated.</div>
<div class="a" style="left:1200px;top:1246.95px;width:1198.5px;font-size:14px;line-height:14px;color:#737373;white-space:nowrap;text-align:right;width:198.5px">NetworkManager</div>
</div></body></html>
